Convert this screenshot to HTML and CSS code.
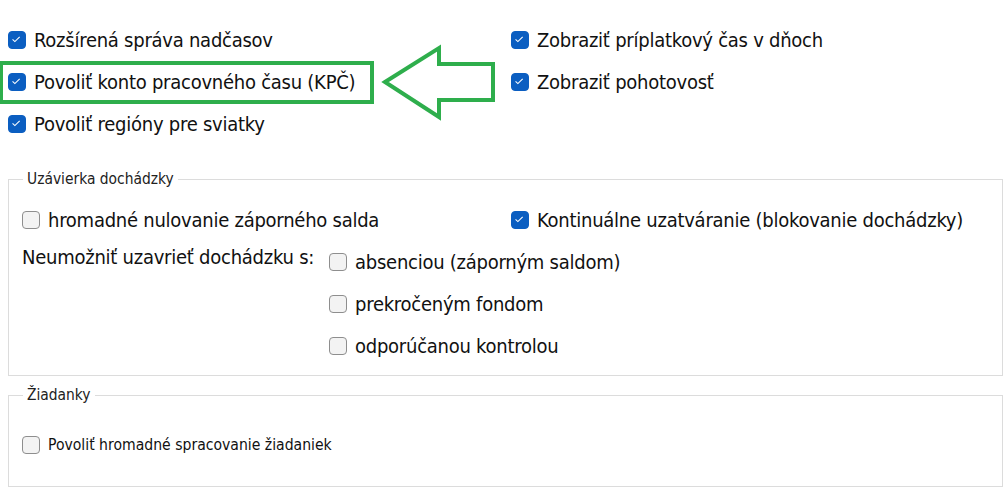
FILE: index.html
```html
<!DOCTYPE html>
<html lang="sk">
<head>
    <meta charset="UTF-8">
    <title>Nastavenia dochádzky</title>
    <link rel="stylesheet" href="styles.css">
</head>
<body>
    <div class="top">
        <div class="opts">
            <label class="opt"><span class="box on"><svg viewBox="0 0 18 18"><path d="M5 9.3l2.6 2.5 5.4-5.4"/></svg></span>Rozšírená správa nadčasov</label>
            <label class="opt"><span class="box on"><svg viewBox="0 0 18 18"><path d="M5 9.3l2.6 2.5 5.4-5.4"/></svg></span>Povoliť konto pracovného času (KPČ)</label>
            <label class="opt"><span class="box on"><svg viewBox="0 0 18 18"><path d="M5 9.3l2.6 2.5 5.4-5.4"/></svg></span>Povoliť regióny pre sviatky</label>
        </div>
        <div class="opts">
            <label class="opt"><span class="box on"><svg viewBox="0 0 18 18"><path d="M5 9.3l2.6 2.5 5.4-5.4"/></svg></span>Zobraziť príplatkový čas v dňoch</label>
            <label class="opt"><span class="box on"><svg viewBox="0 0 18 18"><path d="M5 9.3l2.6 2.5 5.4-5.4"/></svg></span>Zobraziť pohotovosť</label>
        </div>

        <!-- zvýraznenie -->
        <div class="mark"></div>
        <svg class="arrow" width="120" height="80" viewBox="378 42 120 80">
            <polygon points="385,82 439,48 439,64 493,64 493,100 439,100 439,117"/>
        </svg>
    </div>

    <fieldset class="group">
        <legend>Uzávierka dochádzky</legend>
        <div class="group-body">
            <div class="pair">
                <label class="opt"><span class="box"></span>hromadné nulovanie záporného salda</label>
                <label class="opt"><span class="box on"><svg viewBox="0 0 18 18"><path d="M5 9.3l2.6 2.5 5.4-5.4"/></svg></span>Kontinuálne uzatváranie (blokovanie dochádzky)</label>
            </div>
            <div class="block">
                <div class="block-label">Neumožniť uzavrieť dochádzku s:</div>
                <div class="block-opts">
                    <label class="opt"><span class="box"></span>absenciou (záporným saldom)</label>
                    <label class="opt"><span class="box"></span>prekročeným fondom</label>
                    <label class="opt"><span class="box"></span>odporúčanou kontrolou</label>
                </div>
            </div>
        </div>
    </fieldset>

    <fieldset class="group second">
        <legend>Žiadanky</legend>
        <div class="group-body small">
            <label class="opt"><span class="box"></span>Povoliť hromadné spracovanie žiadaniek</label>
        </div>
    </fieldset>
</body>
</html>
```

FILE: styles.css
```css
body {
    margin: 0;
    font-family: "DejaVu Sans Condensed", "DejaVu Sans", sans-serif;
    font-size: 20px;
    letter-spacing: -0.25px;
    color: #111;
    background: #fff;
}

.top {
    position: relative;
    display: grid;
    grid-template-columns: 503px 1fr;
    padding: 19px 0 0 8px;
    margin-bottom: 25px;
}

.opt {
    display: flex;
    align-items: center;
    height: 42px;
    white-space: nowrap;
}

.box {
    flex: none;
    width: 16px;
    height: 16px;
    margin-right: 8px;
    border: 1px solid #8e8e8e;
    border-radius: 4px;
    background: #f3f3f3;
}

.box.on {
    background: #0b5ec1;
    border-color: #0b5ec1;
}

.box svg {
    display: block;
    width: 16px;
    height: 16px;
}

.box svg path {
    fill: none;
    stroke: #fff;
    stroke-width: 1.2;
    transform: translate(-1px, -1px);
}

.mark {
    position: absolute;
    left: -1px;
    top: 61px;
    width: 367px;
    height: 35px;
    border: 4px solid #2eae4c;
}

.arrow {
    position: absolute;
    left: 378px;
    top: 42px;
}

.arrow polygon {
    fill: none;
    stroke: #2eae4c;
    stroke-width: 4;
}

.group {
    margin: 0 3px 0 8px;
    padding: 0;
    border: 1px solid #dcdcdc;
}

.group legend {
    margin-left: 14px;
    padding: 0 4px;
    font-size: 15.4px;
    letter-spacing: 0;
    line-height: 18px;
    color: #222;
}

.group-body {
    padding: 11px 0 8px 13px;
}

.pair {
    display: grid;
    grid-template-columns: 489px 1fr;
}

.block {
    display: flex;
    align-items: flex-start;
}

.block-label {
    width: 307px;
    line-height: 32px;
    white-space: nowrap;
}

.second {
    margin-top: 10px;
}

.group-body.small {
    padding: 30px 0 30px 13px;
    font-size: 15.6px;
    letter-spacing: 0;
}

.small .opt {
    height: 22px;
}
```
